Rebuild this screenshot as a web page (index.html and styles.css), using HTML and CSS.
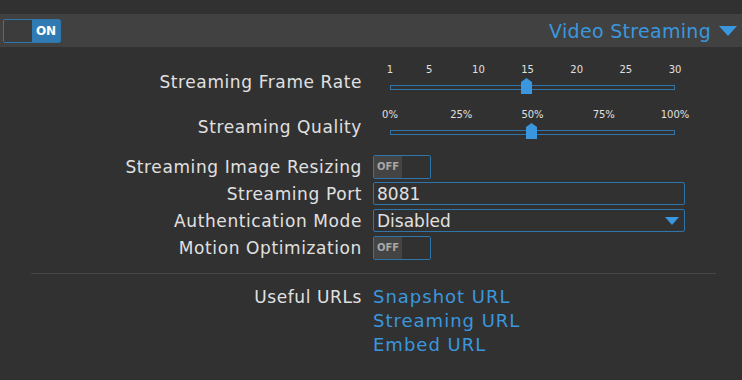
FILE: index.html
```html
<!DOCTYPE html>
<html lang="en">
<head>
    <meta charset="UTF-8">
    <meta name="viewport" content="width=device-width, initial-scale=1.0">
    <title>Video Streaming</title>
    <link rel="stylesheet" href="styles.css">
</head>
<body>
    <div class="section">
        <div class="section-header">
            <div class="switch switch-on">
                <span class="switch-knob"></span>
                <span class="switch-text">ON</span>
            </div>
            <div class="section-title">
                Video Streaming
                <svg class="arrow" width="18" height="10" viewBox="0 0 18 10"><polygon points="0,0 18,0 9,10" fill="#3a97de"/></svg>
            </div>
        </div>

        <div class="section-body">
            <div class="row row-slider">
                <div class="row-label">Streaming Frame Rate</div>
                <div class="slider">
                    <div class="ticks">
                        <span class="tick" style="left: 0%">1</span>
                        <span class="tick" style="left: 13.79%">5</span>
                        <span class="tick" style="left: 31.03%">10</span>
                        <span class="tick" style="left: 48.28%">15</span>
                        <span class="tick" style="left: 65.52%">20</span>
                        <span class="tick" style="left: 82.76%">25</span>
                        <span class="tick" style="left: 100%">30</span>
                    </div>
                    <div class="track-area">
                        <div class="track"></div>
                        <svg class="thumb" style="left: 47.8%" width="11" height="16" viewBox="0 0 11 16"><polygon points="0,4 5.5,0 11,4 11,16 0,16" fill="#3a97de"/></svg>
                    </div>
                </div>
            </div>

            <div class="row row-slider">
                <div class="row-label">Streaming Quality</div>
                <div class="slider">
                    <div class="ticks">
                        <span class="tick" style="left: 0%">0%</span>
                        <span class="tick" style="left: 25%">25%</span>
                        <span class="tick" style="left: 50%">50%</span>
                        <span class="tick" style="left: 75%">75%</span>
                        <span class="tick" style="left: 100%">100%</span>
                    </div>
                    <div class="track-area">
                        <div class="track"></div>
                        <svg class="thumb" style="left: 49.5%" width="11" height="16" viewBox="0 0 11 16"><polygon points="0,4 5.5,0 11,4 11,16 0,16" fill="#3a97de"/></svg>
                    </div>
                </div>
            </div>

            <div class="row">
                <div class="row-label">Streaming Image Resizing</div>
                <div class="switch switch-off">
                    <span class="switch-text">OFF</span>
                    <span class="switch-knob"></span>
                </div>
            </div>

            <div class="row">
                <div class="row-label">Streaming Port</div>
                <input class="text-input" type="text" value="8081">
            </div>

            <div class="row">
                <div class="row-label">Authentication Mode</div>
                <div class="select-wrap">
                    <select class="select-input">
                        <option>Disabled</option>
                        <option>Basic</option>
                        <option>Digest</option>
                    </select>
                    <svg class="select-arrow" width="14" height="8" viewBox="0 0 14 8"><polygon points="0,0 14,0 7,8" fill="#3a97de"/></svg>
                </div>
            </div>

            <div class="row">
                <div class="row-label">Motion Optimization</div>
                <div class="switch switch-off">
                    <span class="switch-text">OFF</span>
                    <span class="switch-knob"></span>
                </div>
            </div>

            <div class="separator"></div>

            <div class="row row-links">
                <div class="row-label">Useful URLs</div>
                <div class="links">
                    <a href="#">Snapshot URL</a>
                    <a href="#">Streaming URL</a>
                    <a href="#">Embed URL</a>
                </div>
            </div>
        </div>
    </div>
</body>
</html>
```

FILE: styles.css
```css
body {
    font-family: 'DejaVu Sans', sans-serif;
    background-color: #313131;
    color: #e0e0e0;
    margin: 0;
    padding: 14px 0 0 0;
}
.section-header {
    background: #414141;
    height: 33px;
    display: flex;
    align-items: center;
    justify-content: space-between;
    padding: 0 5px 0 3px;
}
.section-title {
    color: #3a97de;
    font-size: 19px;
    letter-spacing: 0.3px;
    display: flex;
    align-items: center;
    gap: 8px;
}
.switch {
    display: flex;
    width: 58px;
    height: 24px;
    box-sizing: border-box;
    border: 1px solid #2f75aa;
    border-radius: 2px;
    overflow: hidden;
}
.switch-knob {
    flex: 1;
}
.switch-text {
    width: 28px;
    display: flex;
    align-items: center;
    justify-content: center;
    font-weight: bold;
}
.switch-on .switch-knob {
    background: #3c3c3c;
}
.switch-on .switch-text {
    background: #317bb4;
    color: #fff;
    font-size: 12px;
}
.switch-off .switch-text {
    background: #444;
    color: #a8a8a8;
    font-size: 10px;
}
.switch-off .switch-knob {
    background: #313131;
}
.section-body {
    padding: 16px 0 0 0;
}
.row {
    display: flex;
    align-items: center;
    height: 27px;
}
.row-label {
    width: 362px;
    text-align: right;
    font-size: 17px;
    letter-spacing: 0.6px;
    margin-right: 11px;
    flex-shrink: 0;
}
.row-slider {
    height: 31px;
    margin-bottom: 14px;
}
.row-slider .row-label {
    padding-top: 7px;
}
.slider {
    width: 285px;
    margin-left: 17px;
}
.ticks {
    position: relative;
    height: 15px;
}
.tick {
    position: absolute;
    top: 0;
    transform: translateX(-50%);
    font-size: 10px;
    line-height: 14px;
    color: #e0e0e0;
}
.track-area {
    position: relative;
    height: 16px;
}
.track {
    position: absolute;
    left: 0;
    right: 0;
    top: 7px;
    height: 5px;
    box-sizing: border-box;
    border: 1px solid #2f75aa;
}
.thumb {
    position: absolute;
    top: 0;
    margin-left: -5px;
}
.text-input,
.select-input {
    width: 312px;
    height: 23px;
    box-sizing: border-box;
    border: 1px solid #2f75aa;
    border-radius: 2px;
    background: #313131;
    color: #e0e0e0;
    font-family: 'DejaVu Sans', sans-serif;
    font-size: 17px;
    padding: 0 3px;
    outline: none;
}
.select-input {
    appearance: none;
    -webkit-appearance: none;
    padding: 0 3px;
}
.select-wrap {
    position: relative;
}
.select-arrow {
    position: absolute;
    right: 6px;
    top: 8px;
    pointer-events: none;
}
.separator {
    height: 1px;
    background: #474747;
    margin: 12px 26px 11px 31px;
}
.row-links {
    height: auto;
    align-items: flex-start;
}
.row-links .row-label {
    line-height: 24px;
}
.links {
    display: flex;
    flex-direction: column;
}
.links a {
    color: #3a97de;
    text-decoration: none;
    font-size: 18px;
    line-height: 24px;
    letter-spacing: 1px;
}
```
